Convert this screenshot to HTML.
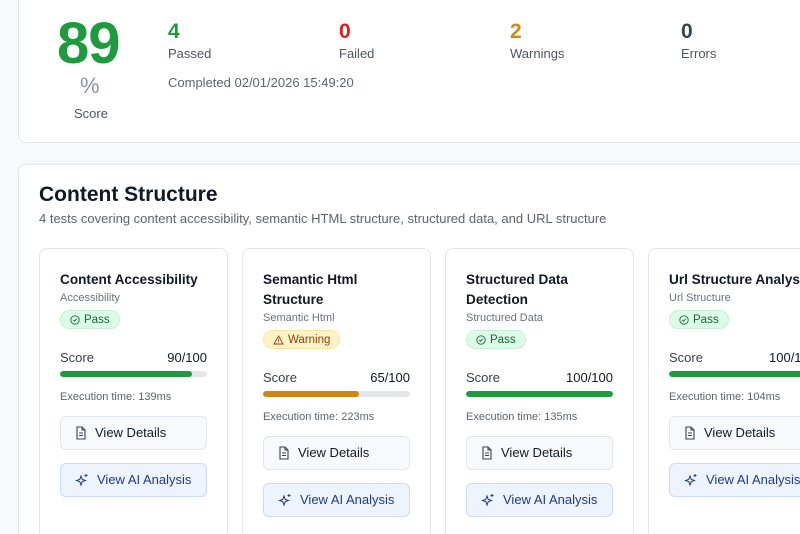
<!DOCTYPE html>
<html><head><meta charset="utf-8"><style>
*{box-sizing:border-box;margin:0;padding:0}
html,body{width:800px;height:534px;overflow:hidden}
body{background:#f8f9fb;font-family:"Liberation Sans",sans-serif;color:#1f2937;position:relative}
.top{position:absolute;left:18px;top:-10px;width:800px;height:153px;background:#fff;border:1px solid #e3e6eb;border-radius:8px}
.sec{position:absolute;left:18px;top:164px;width:800px;height:370px;background:#fff;border:1px solid #e3e6eb;border-bottom:none;border-radius:8px 8px 0 0}
.big{position:absolute;left:57px;top:10px;font-size:58px;font-weight:bold;color:#1f9a3f;letter-spacing:-1px}
.pct{position:absolute;left:80px;top:73px;font-size:22px;color:#8a93a6}
.sc{position:absolute;left:74px;top:106px;font-size:13px;color:#4b5563}
.st{position:absolute;top:20px}
.st b{display:block;font-size:21px;font-weight:bold}
.st span{display:block;font-size:13px;color:#4b5563;margin-top:2px}
.comp{position:absolute;left:168px;top:75px;font-size:13px;color:#5b6475}
h2{position:absolute;left:39px;top:183px;font-size:21px;font-weight:bold;color:#111827}
.desc{position:absolute;left:39px;top:211px;font-size:13px;color:#5b6475}
.card{position:absolute;top:248px;width:189px;height:286px;background:#fff;border:1px solid #e3e6eb;border-bottom:none;border-radius:8px 8px 0 0;padding:21px 20px;overflow:hidden}
.card h3{font-size:13.6px;font-weight:bold;color:#111827;line-height:20px;width:150px}
.card .sub{font-size:11px;color:#6b7280;margin-top:2px;white-space:nowrap}
.badge{display:inline-flex;align-items:center;gap:4px;height:19px;padding:0 9px;border-radius:10px;font-size:11.5px;margin-top:6px}
.pass{background:#dcfce7;color:#166534;border:1px solid #c5f0d3}
.warn{background:#fef3c7;color:#92400e;border:1px solid #fbe6a0}
.row{display:flex;justify-content:space-between;font-size:13px;margin-top:20px;color:#374151;width:147px}
.row b{font-weight:normal;color:#111827}
.bar{width:147px;height:6px;background:#e5e7eb;border-radius:3px;margin-top:6px;overflow:hidden}
.bar i{display:block;height:100%;border-radius:3px}
.ex{font-size:11px;color:#5b6475;margin-top:14px;white-space:nowrap}
.btn{width:147px;height:34px;border-radius:6px;display:flex;align-items:center;padding-left:14px;gap:8px;font-size:13px;white-space:nowrap}
.b1{background:#f8f9fb;border:1px solid #e3e6eb;color:#111827;margin-top:13px}
.b2{background:#eef4fe;border:1px solid #c9dbf7;color:#1e3a8a;margin-top:13px}
</style></head><body>
<div class="top"></div>
<div class="big">89</div><div class="pct">%</div><div class="sc">Score</div>
<div class="st" style="left:168px"><b style="color:#1f9a3f">4</b><span>Passed</span></div>
<div class="st" style="left:339px"><b style="color:#dc1f1f">0</b><span>Failed</span></div>
<div class="st" style="left:510px"><b style="color:#d08a12">2</b><span>Warnings</span></div>
<div class="st" style="left:681px"><b style="color:#374151">0</b><span>Errors</span></div>
<div class="comp">Completed 02/01/2026 15:49:20</div>
<div class="sec"></div>
<h2>Content Structure</h2>
<div class="desc">4 tests covering content accessibility, semantic HTML structure, structured data, and URL structure</div>

<div class="card" style="left:39px">
<h3>Content Accessibility</h3><div class="sub">Accessibility</div>
<span class="badge pass"><svg width="10" height="10" viewBox="0 0 10 10"><circle cx="5" cy="5" r="4.2" fill="none" stroke="#166534" stroke-width="0.9"/><path d="M3.2 5.1l1.2 1.2 2.3-2.5" fill="none" stroke="#166534" stroke-width="0.9"/></svg>Pass</span>
<div class="row"><span>Score</span><b>90/100</b></div>
<div class="bar"><i style="width:90%;background:#1f9a3f"></i></div>
<div class="ex">Execution time: 139ms</div>
<div class="btn b1"><svg width="12" height="14" viewBox="0 0 12 14"><path d="M2 1h5l3 3v9H2z M7 1v3h3 M4 7h4 M4 9.5h4" fill="none" stroke="#374151" stroke-width="1.1"/></svg>View Details</div>
<div class="btn b2"><svg width="14" height="14" viewBox="0 0 14 14"><path d="M6 3l1.2 3.3L10.5 7.5 7.2 8.7 6 12 4.8 8.7 1.5 7.5 4.8 6.3z M11 1v3 M9.5 2.5h3" fill="none" stroke="#1e3a8a" stroke-width="1"/></svg>View AI Analysis</div>
</div>

<div class="card" style="left:242px">
<h3>Semantic Html Structure</h3><div class="sub">Semantic Html</div>
<span class="badge warn"><svg width="11" height="10" viewBox="0 0 11 10"><path d="M5.5 1L10 9H1z M5.5 4v2.5 M5.5 7.5v.5" fill="none" stroke="#92400e" stroke-width="0.9"/></svg>Warning</span>
<div class="row"><span>Score</span><b>65/100</b></div>
<div class="bar"><i style="width:65%;background:#ce8716"></i></div>
<div class="ex">Execution time: 223ms</div>
<div class="btn b1"><svg width="12" height="14" viewBox="0 0 12 14"><path d="M2 1h5l3 3v9H2z M7 1v3h3 M4 7h4 M4 9.5h4" fill="none" stroke="#374151" stroke-width="1.1"/></svg>View Details</div>
<div class="btn b2"><svg width="14" height="14" viewBox="0 0 14 14"><path d="M6 3l1.2 3.3L10.5 7.5 7.2 8.7 6 12 4.8 8.7 1.5 7.5 4.8 6.3z M11 1v3 M9.5 2.5h3" fill="none" stroke="#1e3a8a" stroke-width="1"/></svg>View AI Analysis</div>
</div>

<div class="card" style="left:445px">
<h3>Structured Data Detection</h3><div class="sub">Structured Data</div>
<span class="badge pass"><svg width="10" height="10" viewBox="0 0 10 10"><circle cx="5" cy="5" r="4.2" fill="none" stroke="#166534" stroke-width="0.9"/><path d="M3.2 5.1l1.2 1.2 2.3-2.5" fill="none" stroke="#166534" stroke-width="0.9"/></svg>Pass</span>
<div class="row"><span>Score</span><b>100/100</b></div>
<div class="bar"><i style="width:100%;background:#1f9a3f"></i></div>
<div class="ex">Execution time: 135ms</div>
<div class="btn b1"><svg width="12" height="14" viewBox="0 0 12 14"><path d="M2 1h5l3 3v9H2z M7 1v3h3 M4 7h4 M4 9.5h4" fill="none" stroke="#374151" stroke-width="1.1"/></svg>View Details</div>
<div class="btn b2"><svg width="14" height="14" viewBox="0 0 14 14"><path d="M6 3l1.2 3.3L10.5 7.5 7.2 8.7 6 12 4.8 8.7 1.5 7.5 4.8 6.3z M11 1v3 M9.5 2.5h3" fill="none" stroke="#1e3a8a" stroke-width="1"/></svg>View AI Analysis</div>
</div>

<div class="card" style="left:648px">
<h3 style="white-space:nowrap">Url Structure Analysis</h3><div class="sub">Url Structure</div>
<span class="badge pass"><svg width="10" height="10" viewBox="0 0 10 10"><circle cx="5" cy="5" r="4.2" fill="none" stroke="#166534" stroke-width="0.9"/><path d="M3.2 5.1l1.2 1.2 2.3-2.5" fill="none" stroke="#166534" stroke-width="0.9"/></svg>Pass</span>
<div class="row"><span>Score</span><b>100/100</b></div>
<div class="bar"><i style="width:100%;background:#1f9a3f"></i></div>
<div class="ex">Execution time: 104ms</div>
<div class="btn b1"><svg width="12" height="14" viewBox="0 0 12 14"><path d="M2 1h5l3 3v9H2z M7 1v3h3 M4 7h4 M4 9.5h4" fill="none" stroke="#374151" stroke-width="1.1"/></svg>View Details</div>
<div class="btn b2"><svg width="14" height="14" viewBox="0 0 14 14"><path d="M6 3l1.2 3.3L10.5 7.5 7.2 8.7 6 12 4.8 8.7 1.5 7.5 4.8 6.3z M11 1v3 M9.5 2.5h3" fill="none" stroke="#1e3a8a" stroke-width="1"/></svg>View AI Analysis</div>
</div>
</body></html>
